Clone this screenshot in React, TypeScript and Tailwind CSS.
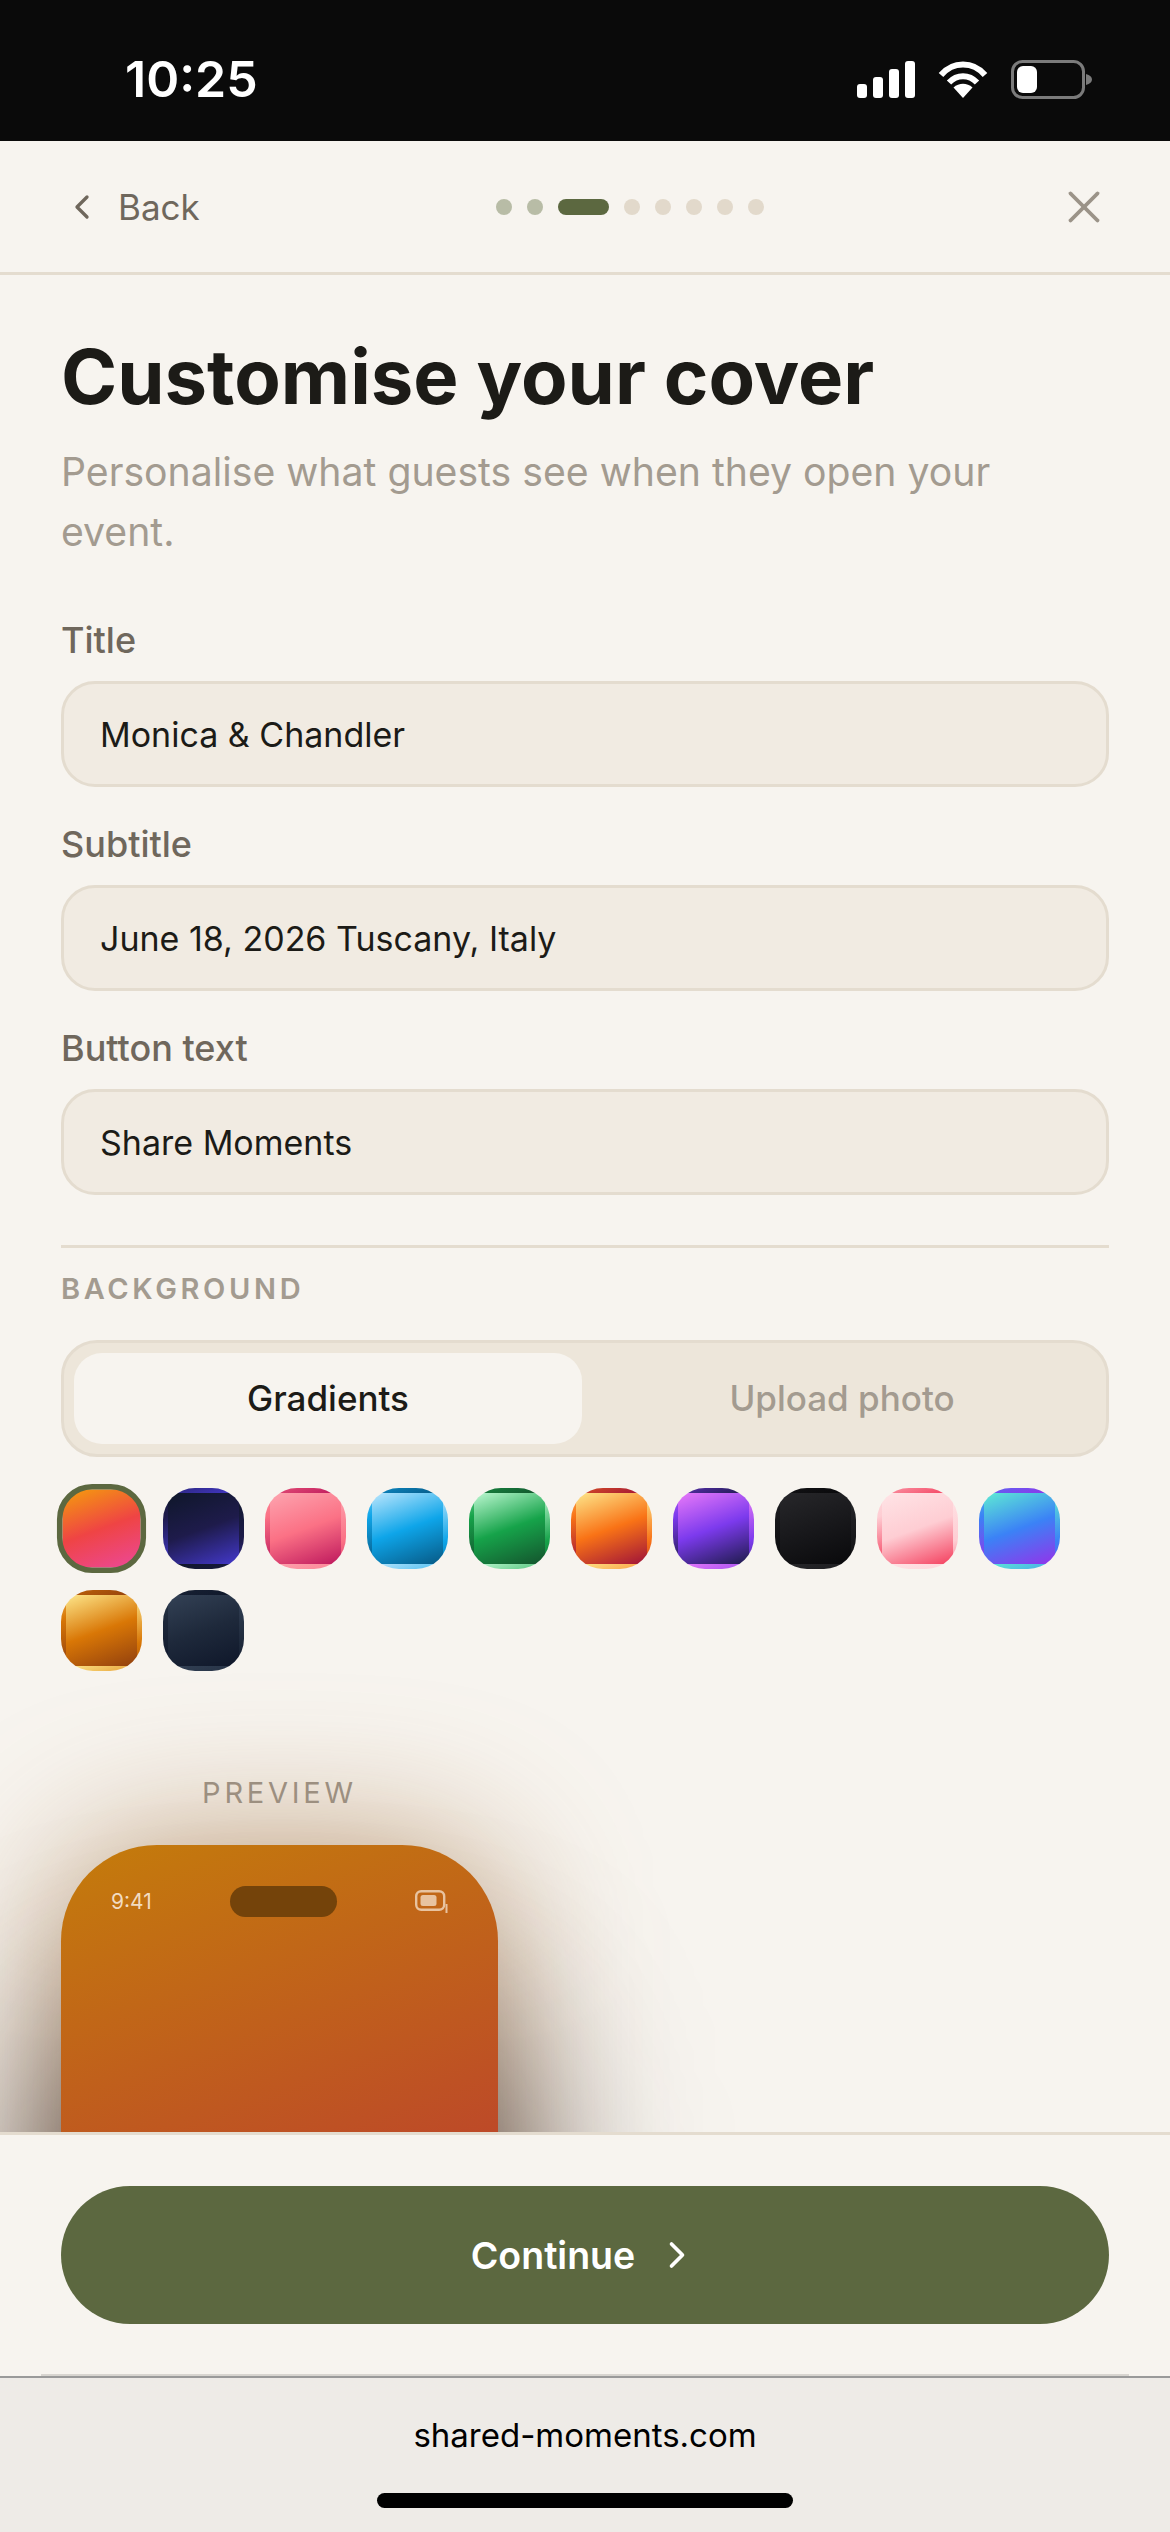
import { ChevronLeft, ChevronRight, X } from 'lucide-react';

const swatches = [
  'bg-[linear-gradient(160deg,#f59e0b,#ef4444,#ec4899)] border-[#5c6840] scale-110',
  'bg-[linear-gradient(160deg,#0f172a,#1e1b4b,#4338ca)] border-transparent',
  'bg-[linear-gradient(160deg,#fda4af,#fb7185,#be185d)] border-transparent',
  'bg-[linear-gradient(160deg,#bae6fd,#0ea5e9,#075985)] border-transparent',
  'bg-[linear-gradient(160deg,#bbf7d0,#16a34a,#14532d)] border-transparent',
  'bg-[linear-gradient(160deg,#fde68a,#f97316,#9f1239)] border-transparent',
  'bg-[linear-gradient(160deg,#e879f9,#7c3aed,#1e1b4b)] border-transparent',
  'bg-[linear-gradient(160deg,#27272a,#18181b,#09090b)] border-transparent',
  'bg-[linear-gradient(160deg,#ffe4e6,#fecdd3,#f43f5e)] border-transparent',
  'bg-[linear-gradient(160deg,#5eead4,#3b82f6,#9333ea)] border-transparent',
  'bg-[linear-gradient(160deg,#fde68a,#d97706,#92400e)] border-transparent',
  'bg-[linear-gradient(160deg,#334155,#1e293b,#0f172a)] border-transparent',
];

const fields = [
  { label: 'Title', value: 'Monica & Chandler' },
  { label: 'Subtitle', value: 'June 18, 2026 Tuscany, Italy' },
  { label: 'Button text', value: 'Share Moments' },
];

function StatusIcons() {
  return (
    <div className="flex items-center gap-[23px]">
      {/* Signal */}
      <svg width="58" height="37" viewBox="0 0 58 37" fill="#fff">
        <rect x="0" y="23" width="10" height="14" rx="3" />
        <rect x="16" y="16" width="10" height="21" rx="3" />
        <rect x="32" y="8" width="10" height="29" rx="3" />
        <rect x="48" y="0" width="10" height="37" rx="3" />
      </svg>
      {/* Wifi */}
      <svg width="50" height="37" viewBox="0 0 50 37" fill="none" stroke="#fff" strokeWidth="6">
        <path d="M3 14 C15 0 35 0 47 14" />
        <path d="M11 21.5 C19 13 31 13 39 21.5" />
        <path d="M25 37 L15.5 26.5 C21 21.5 29 21.5 34.5 26.5 Z" fill="#fff" stroke="none" />
      </svg>
      {/* Battery */}
      <svg width="81" height="39" viewBox="0 0 81 39" fill="none">
        <rect x="1.5" y="1.5" width="71" height="36" rx="10" stroke="#7b7b7b" strokeWidth="3" />
        <rect x="6" y="6" width="20" height="27" rx="6" fill="#fff" />
        <path d="M75 14 C79 15 81 17 81 19.5 C81 22 79 24 75 25 Z" fill="#7b7b7b" />
      </svg>
    </div>
  );
}

export default function App() {
  return (
    <div className="w-[1170px] h-[2532px] flex flex-col overflow-hidden bg-[#f7f4ef] font-['Inter',sans-serif]">
      <div className="h-[141px] shrink-0 bg-[#0a0a0a] flex items-center justify-between pl-[125px] pr-[78px] pt-[17px]">
        <span className="text-[50px] leading-none font-semibold text-white">10:25</span>
        <StatusIcons />
      </div>

      {/* Top nav with step dots */}
      <div className="h-[134px] shrink-0 border-b-[3px] border-[#e4dccf] px-[62px] flex items-center justify-between">
        <div className="flex items-center gap-[16px] text-[#6f675c]">
          <ChevronLeft size={40} strokeWidth={2} />
          <span className="w-[82px] pt-[2px] text-[35px] leading-none">Back</span>
        </div>
        <div className="flex items-center gap-[15px]">
          <span className="w-4 h-4 rounded-full bg-[#b8bca6]" />
          <span className="w-4 h-4 rounded-full bg-[#b8bca6]" />
          <span className="w-[51px] h-4 rounded-full bg-[#5c6840]" />
          <span className="w-4 h-4 rounded-full bg-[#e2d9cb]" />
          <span className="w-4 h-4 rounded-full bg-[#e2d9cb]" />
          <span className="w-4 h-4 rounded-full bg-[#e2d9cb]" />
          <span className="w-4 h-4 rounded-full bg-[#e2d9cb]" />
          <span className="w-4 h-4 rounded-full bg-[#e2d9cb]" />
        </div>
        <div className="w-12 h-12 flex items-center justify-center text-[#9b9388]">
          <X size={54} strokeWidth={1.7} className="shrink-0" />
        </div>
      </div>

      <div className="flex-1 min-h-0 overflow-hidden px-[61px] pt-[56px]">
        <h1 className="text-[76px] leading-[90px] font-bold text-[#1c1b17]">Customise your cover</h1>
        <p className="mt-[21px] text-[39.2px] leading-[60px] text-[#a39b90]">
          Personalise what guests see when they open your event.
        </p>

        <div className="mt-[56px] flex flex-col gap-[35px]">
          {fields.map((f) => (
            <div key={f.label}>
              <div className="h-[44px] text-[36px] leading-[44px] font-medium text-[#6f675c]">{f.label}</div>
              <div className="mt-[19px] h-[106px] rounded-[34px] border-[3px] border-[#e4dccf] bg-[#f1ebe2] pl-[36px] flex items-center text-[34px] text-[#1c1b17]">
                {f.value}
              </div>
            </div>
          ))}
        </div>

        <div className="mt-[50px] h-[3px] bg-[#e4dccf]" />
        <div className="mt-[23px] h-[36px] text-[29px] leading-[36px] font-semibold tracking-[0.125em] text-[#a39b90]">BACKGROUND</div>

        <div className="mt-[33px] h-[117px] rounded-[36px] border-[3px] border-[#e4dccf] bg-[#ede6da] p-[10px] flex gap-[6px]">
          <div className="flex-1 rounded-[28px] bg-[#f7f4ef] flex items-center justify-center text-[35px] font-medium text-[#1c1b17]">Gradients</div>
          <div className="flex-1 rounded-[28px] flex items-center justify-center text-[35px] font-medium text-[#a39b90]">Upload photo</div>
        </div>

        <div className="mt-[31px] flex flex-wrap gap-[21px]">
          {swatches.map((s, i) => (
            <div key={i} className={`w-[81px] h-[81px] rounded-[32px] border-[5px] ${s}`} />
          ))}
        </div>

        {/* Preview phone, cut off by the footer */}
        <div className="mt-[104px] w-[437px]">
          <div className="relative z-10 h-[36px] text-center text-[29px] leading-[36px] tracking-[0.13em] text-[#9c8f80]">PREVIEW</div>
          <div className="relative mt-[34px] h-[948px]">
            {/* Soft shadows behind the phone */}
            <div className="absolute inset-0 rounded-[96px] bg-[#965a1e]/55 blur-[75px]" />
            <div className="absolute inset-x-0 top-[190px] -bottom-[190px] rounded-[96px] bg-[#1a1015]/85 blur-[100px]" />
            <div className="relative h-full rounded-[96px] bg-[linear-gradient(160deg,#c47c0b_0%,#bd4a28_40%,#bd3a70_100%)] px-[50px] pt-[41px]">
              <div className="flex items-center justify-between">
                <span className="text-[21px] leading-none text-[#f2dcc2]">9:41</span>
                <span className="w-[107px] h-[31px] rounded-full bg-[#74430a]" />
                <svg width="33" height="24" viewBox="0 0 33 24" fill="none">
                  <rect x="1.2" y="1.2" width="28" height="18.6" rx="5" stroke="#e8c3a0" strokeWidth="2.4" />
                  <rect x="5.5" y="5" width="16" height="11" rx="2.5" fill="#e8c3a0" />
                  <path d="M31.5 14 V23" stroke="#e8c3a0" strokeWidth="2" />
                </svg>
              </div>
            </div>
          </div>
        </div>
      </div>

      <div className="relative shrink-0 border-t-[3px] border-[#e4dccf] bg-[#f7f4ef] pt-[51px]">
        <div className="mx-[61px] h-[138px] rounded-full bg-[#5c6840] flex items-center justify-center gap-[20px] text-white">
          <span className="text-[37.5px] font-semibold pt-[2px]">Continue</span>
          <ChevronRight size={44} strokeWidth={2} />
        </div>
        <div className="mt-[50px] mx-[41px] h-[2px] bg-[#d8d5d0]" />
      </div>

      <div className="h-[156px] shrink-0 border-t-2 border-[#9a9a9a] bg-[#eeebe7] flex flex-col items-center">
        <div className="mt-[37px] text-[33px] leading-[40px] text-black">shared-moments.com</div>
        <div className="mt-[38px] w-[416px] h-[15px] rounded-full bg-black" />
      </div>
    </div>
  );
}
